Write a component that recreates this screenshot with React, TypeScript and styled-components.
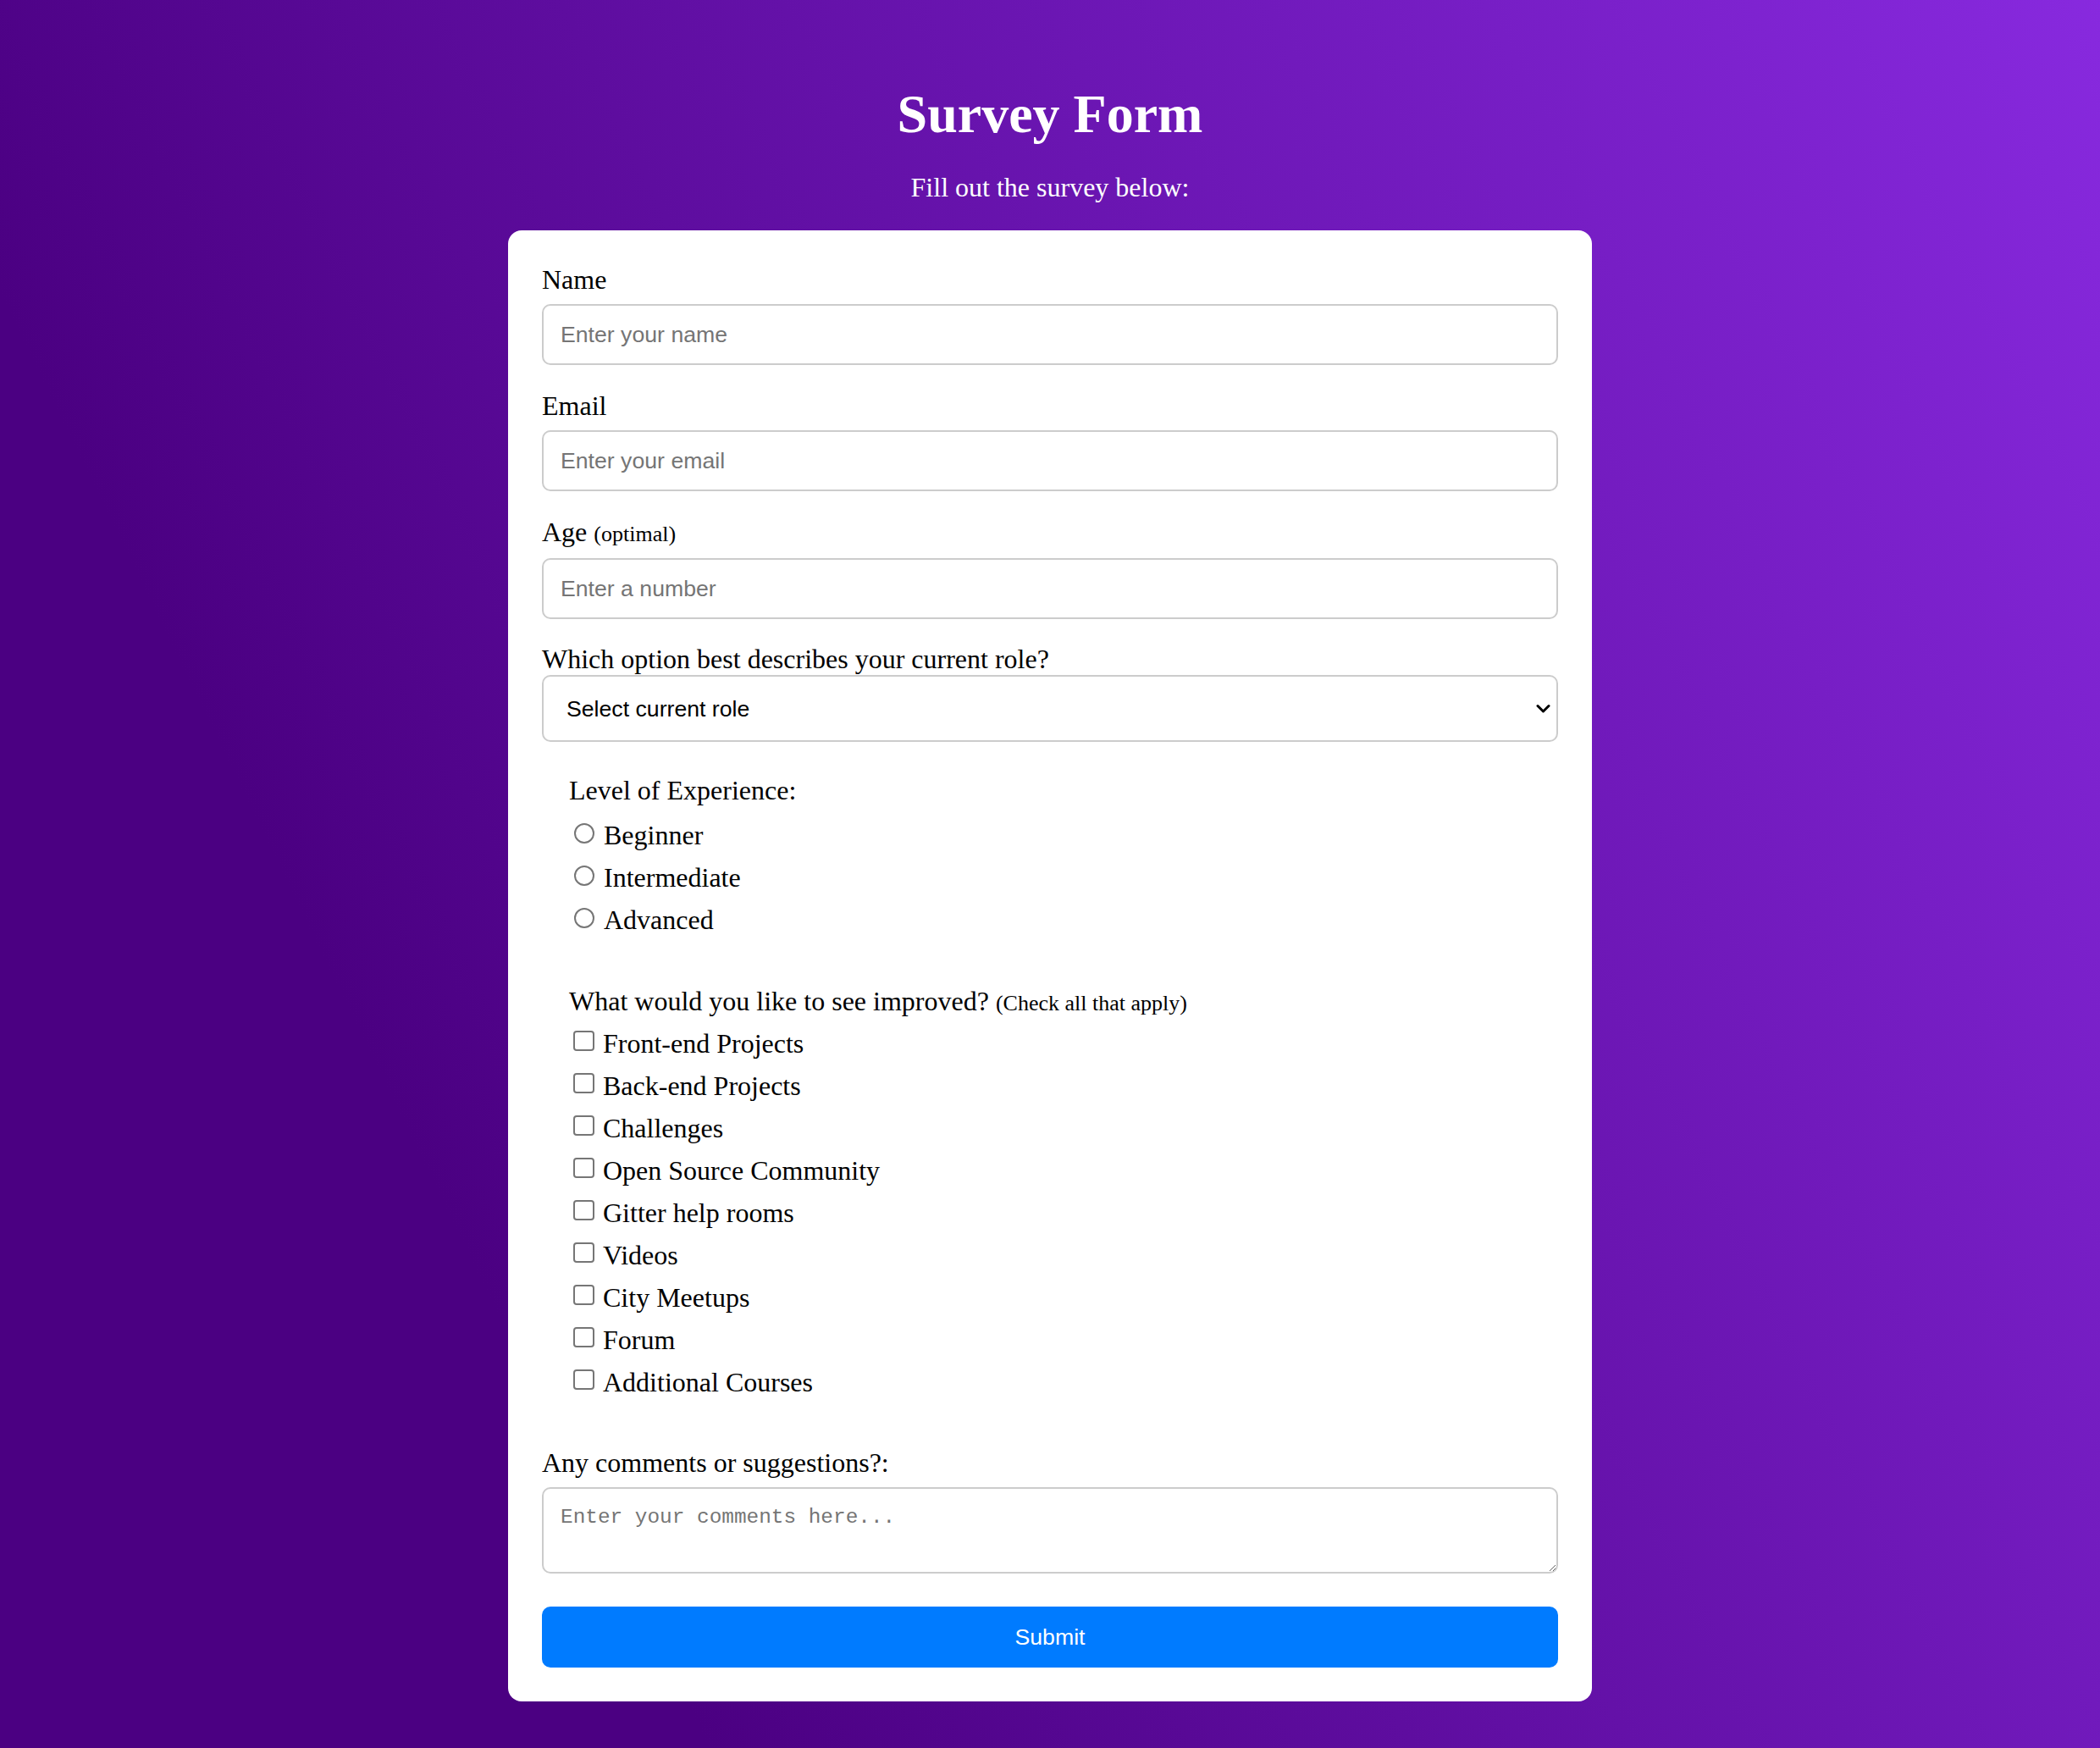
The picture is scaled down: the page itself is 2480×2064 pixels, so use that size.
import React from "react";
import styled, { createGlobalStyle } from "styled-components";

const GlobalStyle = createGlobalStyle`
  html, body {
    margin: 0;
    padding: 0;
  }
  body {
    font-family: "Liberation Serif", "Times New Roman", serif;
    color: #000;
  }
  *, *::before, *::after {
    box-sizing: border-box;
  }
`;

const Page = styled.div`
  min-height: 100vh;
  padding: 98px 0 40px;
  background: linear-gradient(64deg, #4b0082 24%, #8a2be2 103%);
  display: flex;
  flex-direction: column;
  align-items: center;
`;

const Title = styled.h1`
  margin: 0 0 31px;
  font-size: 64px;
  line-height: 74px;
  font-weight: 700;
  color: #fff;
  text-align: center;
`;

const Subtitle = styled.p`
  margin: 0 0 32px;
  font-size: 32px;
  line-height: 37px;
  color: #fff;
  text-align: center;
`;

const Card = styled.form`
  width: 1280px;
  padding: 40px;
  background: #fff;
  border-radius: 16px;
  display: flex;
  flex-direction: column;
`;

const Field = styled.div<{ $mb?: number; $mt?: number }>`
  display: flex;
  flex-direction: column;
  margin-top: ${(p) => (p.$mt ?? 0)}px;
  margin-bottom: ${(p) => (p.$mb ?? 30)}px;
`;

const Label = styled.label<{ $gap?: number }>`
  display: block;
  font-size: 32px;
  line-height: 37px;
  margin-bottom: ${(p) => (p.$gap ?? 10)}px;
`;

const Small = styled.span`
  font-size: 26px;
`;

const TextInput = styled.input`
  width: 100%;
  height: 72px;
  padding: 0 20px;
  border: 2px solid #cccccc;
  border-radius: 10px;
  font-family: "Liberation Sans", Arial, sans-serif;
  font-size: 26.67px;
  color: #000;
  background: #fff;
  outline: none;
  &::placeholder {
    color: #757575;
  }
`;

const SelectWrap = styled.div`
  position: relative;
  width: 100%;
`;

const Select = styled.select`
  appearance: none;
  -webkit-appearance: none;
  width: 100%;
  height: 79px;
  padding: 0 50px 0 27px;
  border: 2px solid #cccccc;
  border-radius: 10px;
  background: #fff;
  font-family: "Liberation Sans", Arial, sans-serif;
  font-size: 26.67px;
  color: #000;
  outline: none;
`;

const Chevron = styled.svg`
  position: absolute;
  right: 9px;
  top: 50%;
  transform: translateY(-50%);
  width: 17px;
  height: 11px;
  pointer-events: none;
`;

const Group = styled.div<{ $mt: number }>`
  margin-top: ${(p) => p.$mt}px;
  display: flex;
  flex-direction: column;
`;

const GroupTitle = styled.div<{ $after?: number }>`
  height: 50px;
  padding-left: 32px;
  margin-bottom: ${(p) => (p.$after ?? 0)}px;
  font-size: 32px;
  line-height: 50px;
`;

const Option = styled.label`
  display: flex;
  align-items: flex-start;
  padding-left: 37px;
  height: 50px;
  font-size: 32px;
  line-height: 50px;
  cursor: pointer;
`;

const Radio = styled.input.attrs({ type: "radio" })`
  appearance: none;
  -webkit-appearance: none;
  flex: none;
  width: 24px;
  height: 24px;
  margin: 11px 11px 0 1px;
  border: 2px solid #767676;
  border-radius: 50%;
  background: #fff;
  &:checked {
    background: radial-gradient(circle, #0075ff 0 45%, #fff 50%);
    border-color: #0075ff;
  }
`;

const Checkbox = styled.input.attrs({ type: "checkbox" })`
  appearance: none;
  -webkit-appearance: none;
  flex: none;
  width: 25px;
  height: 24px;
  margin: 10px 10px 0 0;
  border: 2px solid #767676;
  border-radius: 4px;
  background: #fff;
  &:checked {
    background: #0075ff;
    border-color: #0075ff;
  }
`;

const OptionText = styled.span`
  white-space: nowrap;
`;

const Comments = styled.textarea`
  display: block;
  width: 100%;
  height: 102px;
  padding: 20px;
  border: 2px solid #cccccc;
  border-radius: 10px;
  font-family: "Liberation Mono", "Courier New", monospace;
  font-size: 24.4px;
  line-height: 28px;
  color: #000;
  background: #fff;
  outline: none;
  &::placeholder {
    color: #757575;
  }
`;

const SubmitButton = styled.button`
  margin-top: 39px;
  width: 100%;
  height: 72px;
  border: none;
  border-radius: 10px;
  background: #007bff;
  color: #fff;
  font-family: "Liberation Sans", Arial, sans-serif;
  font-size: 26.67px;
  cursor: pointer;
`;

const levels = ["Beginner", "Intermediate", "Advanced"];
const improvements = [
  "Front-end Projects",
  "Back-end Projects",
  "Challenges",
  "Open Source Community",
  "Gitter help rooms",
  "Videos",
  "City Meetups",
  "Forum",
  "Additional Courses",
];

export default function App() {
  return (
    <>
      <GlobalStyle />
      <Page>
        <Title>Survey Form</Title>
        <Subtitle>Fill out the survey below:</Subtitle>
        <Card onSubmit={(e) => e.preventDefault()}>
          <Field>
            <Label htmlFor="name">Name</Label>
            <TextInput id="name" type="text" placeholder="Enter your name" />
          </Field>
          <Field>
            <Label htmlFor="email">Email</Label>
            <TextInput id="email" type="email" placeholder="Enter your email" />
          </Field>
          <Field $mb={29}>
            <Label htmlFor="age">
              Age <Small>(optimal)</Small>
            </Label>
            <TextInput id="age" type="number" placeholder="Enter a number" />
          </Field>
          <Field $mb={0}>
            <Label htmlFor="role" $gap={0}>
              Which option best describes your current role?
            </Label>
            <SelectWrap>
              <Select id="role" defaultValue="">
                <option value="" disabled>
                  Select current role
                </option>
                <option value="student">Student</option>
                <option value="job">Full Time Job</option>
                <option value="learner">Full Time Learner</option>
                <option value="other">Other</option>
              </Select>
              <Chevron viewBox="0 0 17 11" fill="none">
                <polyline
                  points="2,2 8.5,8.5 15,2"
                  stroke="#000"
                  strokeWidth="3"
                  strokeLinecap="round"
                  strokeLinejoin="round"
                />
              </Chevron>
            </SelectWrap>
          </Field>

          <Group $mt={32} role="radiogroup">
            <GroupTitle $after={3}>Level of Experience:</GroupTitle>
            {levels.map((l) => (
              <Option key={l}>
                <Radio name="level" value={l} />
                <OptionText>{l}</OptionText>
              </Option>
            ))}
          </Group>

          <Group $mt={46}>
            <GroupTitle>
              What would you like to see improved? <Small>(Check all that apply)</Small>
            </GroupTitle>
            {improvements.map((i) => (
              <Option key={i}>
                <Checkbox name="improve" value={i} />
                <OptionText>{i}</OptionText>
              </Option>
            ))}
          </Group>

          <Field $mb={0} $mt={52}>
            <Label htmlFor="comments">Any comments or suggestions?:</Label>
            <Comments id="comments" placeholder="Enter your comments here..." />
          </Field>

          <SubmitButton type="submit">Submit</SubmitButton>
        </Card>
      </Page>
    </>
  );
}
